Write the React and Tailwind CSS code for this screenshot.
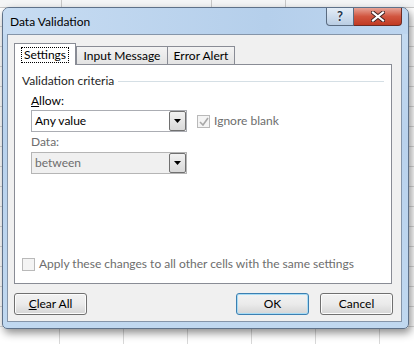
import { useState } from "react";

function Arrow() {
  return (
    <svg width="7" height="4" viewBox="0 0 7 4">
      <path d="M0 0H7L3.5 4Z" fill="#000" />
    </svg>
  );
}

function Combo({ value, disabled }) {
  return (
    <div
      className={`w-[156px] h-[22px] flex items-center border ${
        disabled ? "bg-[#f0f0f0] border-[#b5b5b5]" : "bg-white border-[#abadb3]"
      }`}
    >
      <span className={`flex-1 pl-[3px] ${disabled ? "text-[#6d6d6d]" : "text-black"}`}>{value}</span>
      <div className="w-[17px] h-[20px] flex items-center justify-center border border-[#707070] rounded-[2px] bg-gradient-to-b from-[#f2f2f2] to-[#d9d9d9]">
        <Arrow />
      </div>
    </div>
  );
}

function Check({ checked }) {
  return (
    <div className="w-[13px] h-[13px] border border-[#b9b9b9] bg-[#f4f4f4] flex items-center justify-center">
      {checked && (
        <svg width="10" height="9" viewBox="0 0 10 9">
          <path d="M1 5L4 8L9 1" fill="none" stroke="#a8a8a8" strokeWidth="1.6" />
        </svg>
      )}
    </div>
  );
}

function Btn({ children, primary }) {
  return (
    <button
      className={`w-[73px] h-[22px] rounded-[3px] border text-black bg-gradient-to-b from-[#f2f2f2] via-[#ebebeb] to-[#d5d5d5] ${
        primary
          ? "border-[#3c7fb1] shadow-[inset_0_0_0_1px_#a8dcf5]"
          : "border-[#707070] shadow-[inset_0_0_0_1px_#fcfcfc]"
      }`}
    >
      {children}
    </button>
  );
}

export default function App() {
  const [tab] = useState("Settings");

  return (
    <div className="relative w-[414px] h-[344px] overflow-hidden bg-white bg-[linear-gradient(to_right,#d8d8d8_1px,transparent_1px),linear-gradient(to_bottom,#d8d8d8_1px,transparent_1px)] bg-[size:64px_20px] bg-[position:59px_6px] font-['Lato','Liberation_Sans',sans-serif] text-[12px]">
      {/* ribbon strip behind */}
      <div className="h-[8px] bg-[#f4f5f6] border-b border-[#c8c8c8] flex">
        <div className="w-[62px] border-r border-[#c8c8c8]" />
        <div className="w-[150px] border-r border-[#c8c8c8]" />
        <div className="w-[74px] border-r border-[#c8c8c8]" />
      </div>

      {/* dialog window */}
      <div className="absolute left-[2px] top-[7px] w-[407px] h-[322px] rounded-t-[7px] rounded-b-[5px] border border-[#5e7189] bg-[linear-gradient(to_bottom,#c6dcf2,#b9d2ed_40%,#c0d8f0)] shadow-[2px_4px_8px_rgba(0,0,0,0.45)] flex flex-col">
        {/* title bar */}
        <div className="h-[26px] flex items-start bg-[linear-gradient(to_right,#c7dcf2,#b5cfeb_65%,#bdd5ef)] rounded-t-[6px]">
          <span className="self-center pl-[7px] pt-[1px] text-black text-[12px]">Data Validation</span>
          <div className="ml-auto mr-[6px] flex">
            <div className="w-[28px] h-[18px] rounded-bl-[4px] border border-t-0 border-[#5a6b80] bg-gradient-to-b from-[#e4edf7] to-[#b9cde3] flex items-center justify-center">
              <span className="font-bold text-[13px] leading-none text-[#233349] [text-shadow:0_0_2px_#fff]">?</span>
            </div>
            <div className="w-[48px] h-[18px] rounded-br-[4px] border border-t-0 border-l-0 border-[#6d2a22] bg-[linear-gradient(to_bottom,#e8a497,#d1553f_50%,#c13a23)] flex items-center justify-center">
              <svg width="14" height="11" viewBox="0 0 14 11">
                <path d="M2 1.5L12 9.5M12 1.5L2 9.5" stroke="#3b2020" strokeWidth="4" strokeLinecap="square" />
                <path d="M2 1.5L12 9.5M12 1.5L2 9.5" stroke="#fff" strokeWidth="2.2" strokeLinecap="square" />
              </svg>
            </div>
          </div>
        </div>

        {/* client area */}
        <div className="ml-[4px] mr-[6px] h-[288px] border border-[#8595a9] bg-[#f0f0f0] pl-[6px] pr-[8px] pt-[8px] flex flex-col">
          {/* tabs */}
          <div className="flex items-end h-[22px] relative z-10 -mb-px">
            {["Settings", "Input Message", "Error Alert"].map((t) =>
              t === tab ? (
                <div
                  key={t}
                  className="w-[62px] h-[22px] border border-b-0 border-[#898c95] bg-white flex items-center justify-center"
                >
                  <span className="px-[2px] border border-dotted border-black leading-[14px]">{t}</span>
                </div>
              ) : (
                <div
                  key={t}
                  className={`${t === "Input Message" ? "w-[92px]" : "w-[68px] -ml-px"} h-[19px] border border-[#898c95] bg-gradient-to-b from-[#f3f3f3] to-[#e3e3e3] flex items-center justify-center`}
                >
                  {t}
                </div>
              )
            )}
          </div>

          {/* panel */}
          <div className="w-[378px] h-[220px] border border-[#898c95] bg-white flex flex-col pl-[7px] pr-[7px] pt-[8px]">
            <div className="flex items-center gap-[4px] h-[16px]">
              <span className="text-[#1e1e1e]">Validation criteria</span>
              <div className="flex-1 h-px bg-[#d5dfe5]" />
            </div>

            <div className="pl-[9px] flex flex-col">
              <span className="mt-[4px] h-[16px] leading-[16px]">
                <span className="underline">A</span>llow:
              </span>
              <div className="mt-[1px] flex items-center">
                <Combo value="Any value" />
                <div className="ml-[10px] flex items-center gap-[4px] text-[#6d6d6d]">
                  <Check checked />
                  <span>Ignore blank</span>
                </div>
              </div>
              <span className="mt-[2px] h-[16px] leading-[16px] text-[#6d6d6d]">Data:</span>
              <div className="mt-[2px]">
                <Combo value="between" disabled />
              </div>
            </div>

            <div className="mt-auto mb-[10px] flex items-center gap-[4px] text-[#6d6d6d]">
              <Check />
              <span>Apply these changes to all other cells with the same settings</span>
            </div>
          </div>

          {/* buttons */}
          <div className="mt-[9px] flex items-center">
            <Btn>
              <span className="underline">C</span>lear All
            </Btn>
            <div className="ml-auto flex gap-[11px]">
              <Btn primary>OK</Btn>
              <Btn>Cancel</Btn>
            </div>
          </div>
        </div>
      </div>
    </div>
  );
}
